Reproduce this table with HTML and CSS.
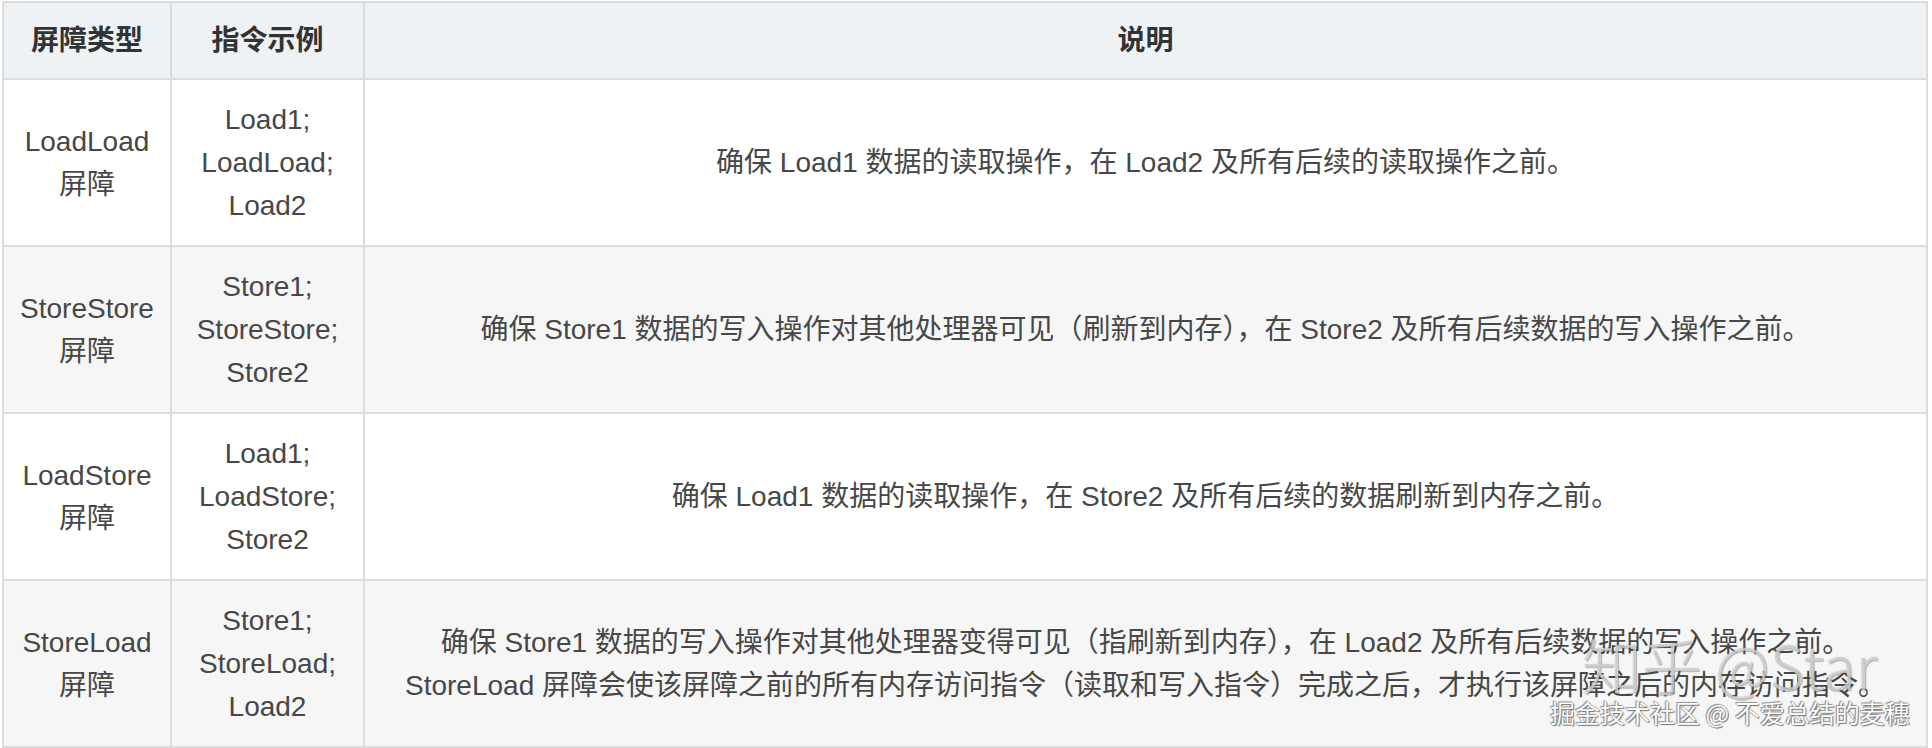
FILE: index.html
```html
<!DOCTYPE html>
<html lang="zh-CN">
<head>
<meta charset="utf-8">
<title>内存屏障</title>
<link rel="stylesheet" href="styles.css">
</head>
<body>
<div class="frame">
  <table class="barriers">
    <colgroup>
      <col class="c-type">
      <col class="c-code">
      <col class="c-desc">
    </colgroup>
    <thead>
      <tr class="head">
        <th>屏障类型</th>
        <th>指令示例</th>
        <th>说明</th>
      </tr>
    </thead>
    <tbody>
      <tr>
        <td>LoadLoad<br>屏障</td>
        <td>Load1;<br>LoadLoad;<br>Load2</td>
        <td>确保 Load1 数据的读取操作，在 Load2 及所有后续的读取操作之前。</td>
      </tr>
      <tr class="alt">
        <td>StoreStore<br>屏障</td>
        <td>Store1;<br>StoreStore;<br>Store2</td>
        <td>确保 Store1 数据的写入操作对其他处理器可见（刷新到内存），在 Store2 及所有后续数据的写入操作之前。</td>
      </tr>
      <tr>
        <td>LoadStore<br>屏障</td>
        <td>Load1;<br>LoadStore;<br>Store2</td>
        <td>确保 Load1 数据的读取操作，在 Store2 及所有后续的数据刷新到内存之前。</td>
      </tr>
      <tr class="alt">
        <td>StoreLoad<br>屏障</td>
        <td>Store1;<br>StoreLoad;<br>Load2</td>
        <td>确保 Store1 数据的写入操作对其他处理器变得可见（指刷新到内存），在 Load2 及所有后续数据的写入操作之前。<br>StoreLoad 屏障会使该屏障之前的所有内存访问指令（读取和写入指令）完成之后，才执行该屏障之后的内存访问指令。</td>
      </tr>
    </tbody>
  </table>
  <div class="wm-zhihu">知乎 @Star</div>
  <div class="wm-juejin">掘金技术社区 @ 不爱总结的麦穗</div>
</div>
</body>
</html>
```
FILE: styles.css
```css
html, body {
  margin: 0;
  padding: 0;
  background: #ffffff;
}

body {
  font-family: "Liberation Sans", "Noto Sans CJK SC", sans-serif;
  color: #474747;
}

.frame {
  position: relative;
  width: 1932px;
  height: 748px;
  padding: 1px 0 0 2px;
  box-sizing: border-box;
  overflow: hidden;
}

.barriers {
  border-collapse: collapse;
  table-layout: fixed;
  width: 1924px;
  font-size: 28px;
  line-height: 43px;
}

.c-type { width: 168px; }
.c-code { width: 193px; }
.c-desc { width: 1563px; }

.barriers th,
.barriers td {
  border: 2px solid #dcdcdc;
  text-align: center;
  vertical-align: middle;
  padding: 0 4px;
}

.barriers th {
  height: 75px;
  font-weight: 700;
  color: #333333;
  background: #eef2f5;
}

.barriers td {
  height: 165px;
}

.barriers .alt td {
  background: #f6f6f6;
}

.wm-zhihu {
  position: absolute;
  left: 1582px;
  top: 628px;
  font-family: "Noto Sans CJK SC", "Liberation Sans", sans-serif;
  font-weight: 300;
  font-size: 60px;
  line-height: 72px;
  color: rgba(255, 255, 255, 0.6);
  text-shadow: 0 0 1px rgba(80, 80, 80, 0.6), 1px 1px 1px rgba(80, 80, 80, 0.35);
  white-space: nowrap;
}

.wm-juejin {
  position: absolute;
  left: 1550px;
  top: 696px;
  font-family: "Noto Sans CJK SC", "Liberation Sans", sans-serif;
  font-size: 25px;
  line-height: 32px;
  color: #ffffff;
  text-shadow: 0 0 1px #555, 1px 1px 1px #777, -1px -1px 1px #999;
  white-space: nowrap;
}
```
